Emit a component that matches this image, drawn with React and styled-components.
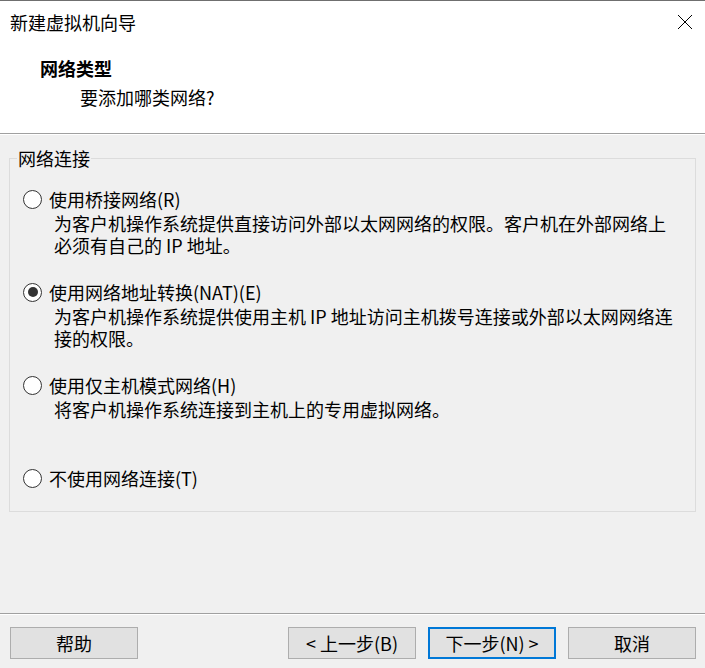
import React from "react";
import styled, { createGlobalStyle } from "styled-components";

const GlobalStyles = createGlobalStyle`
  html, body {
    margin: 0;
    padding: 0;
    background: #f0f0f0;
    font-family: "Noto Sans CJK SC", "Noto Sans", sans-serif;
    color: #000;
  }
  * { box-sizing: border-box; }
`;

const Window = styled.div`
  width: 705px;
  height: 668px;
  display: flex;
  flex-direction: column;
  background: #f0f0f0;
`;

const Header = styled.div`
  height: 134px;
  background: #fff;
  border-top: 1px solid #6f6f6f;
  border-bottom: 1px solid #a0a0a0;
  display: flex;
  flex-direction: column;
`;

const TitleBar = styled.div`
  display: flex;
  align-items: center;
  justify-content: space-between;
  height: 24px;
  margin-top: 9px;
  padding: 0 12px 0 10px;
`;

const Title = styled.div`
  font-size: 18px;
  line-height: 24px;
`;

const Close = styled.svg`
  width: 16px;
  height: 16px;
  display: block;
`;

const Heading = styled.div`
  font-size: 18px;
  line-height: 24px;
  font-weight: bold;
  margin: 22px 0 0 40px;
`;

const SubHeading = styled.div`
  font-size: 18px;
  line-height: 24px;
  margin: 5px 0 0 80px;
`;

const Main = styled.div`
  flex: 1;
  border-top: 1px solid #fff;
  padding: 11px 9px 0;
`;

const Group = styled.fieldset`
  margin: 0;
  padding: 18px 0 22px 13px;
  border: 1px solid #dcdcdc;
  min-width: 0;
`;

const Legend = styled.legend`
  font-size: 18px;
  line-height: 24px;
  padding: 0 1px;
  margin-left: -6px;
  color: #000;
`;

const Options = styled.div`
  display: flex;
  flex-direction: column;
  gap: 25px;
`;

const Option = styled.label`
  display: flex;
  flex-direction: column;
`;

const OptionHead = styled.div`
  display: flex;
  align-items: center;
  gap: 7px;
  height: 22px;
  font-size: 18px;
  line-height: 22px;
`;

const Radio = styled.span`
  width: 19px;
  height: 19px;
  border-radius: 50%;
  border: 1px solid #333;
  background: #fff;
  display: flex;
  align-items: center;
  justify-content: center;
  flex: none;

  &::after {
    content: "";
    width: 10px;
    height: 10px;
    border-radius: 50%;
    background: ${(p) => (p.checked ? "#333" : "transparent")};
  }
`;

const Desc = styled.div`
  margin: 2px 0 0 31px;
  min-height: 44px;
  font-size: 18px;
  line-height: 22px;
  width: 624px;
`;

const Footer = styled.div`
  border-top: 1px solid #a0a0a0;
  box-shadow: inset 0 1px 0 #fff;
  padding: 13px 9px 9px 10px;
  display: flex;
  align-items: center;
`;

const Button = styled.button`
  width: 128px;
  height: 32px;
  margin-left: ${(p) => p.gap || 0}px;
  background: #e1e1e1;
  border: ${(p) => (p.primary ? "2px solid #0078d7" : "1px solid #adadad")};
  font-family: inherit;
  font-size: 18px;
  color: #000;
  padding: 0;
  display: flex;
  align-items: center;
  justify-content: center;
`;

const Spacer = styled.div`
  flex: 1;
`;

const options = [
  {
    label: "使用桥接网络(R)",
    desc: "为客户机操作系统提供直接访问外部以太网网络的权限。客户机在外部网络上必须有自己的 IP 地址。",
  },
  {
    label: "使用网络地址转换(NAT)(E)",
    desc: "为客户机操作系统提供使用主机 IP 地址访问主机拨号连接或外部以太网网络连接的权限。",
    checked: true,
  },
  {
    label: "使用仅主机模式网络(H)",
    desc: "将客户机操作系统连接到主机上的专用虚拟网络。",
  },
  { label: "不使用网络连接(T)" },
];

export default function App() {
  return (
    <Window>
      <GlobalStyles />
      <Header>
        <TitleBar>
          <Title>新建虚拟机向导</Title>
          <Close viewBox="0 0 16 16">
            <path d="M1 1L15 15M15 1L1 15" stroke="#000" strokeWidth="1" fill="none" />
          </Close>
        </TitleBar>
        <Heading>网络类型</Heading>
        <SubHeading>要添加哪类网络?</SubHeading>
      </Header>
      <Main>
        <Group>
          <Legend>网络连接</Legend>
          <Options>
            {options.map((o) => (
              <Option key={o.label}>
                <OptionHead>
                  <Radio checked={o.checked} />
                  {o.label}
                </OptionHead>
                {o.desc && <Desc>{o.desc}</Desc>}
              </Option>
            ))}
          </Options>
        </Group>
      </Main>
      <Footer>
        <Button>帮助</Button>
        <Spacer />
        <Button>&lt; 上一步(B)</Button>
        <Button gap={12} primary>下一步(N) &gt;</Button>
        <Button gap={12}>取消</Button>
      </Footer>
    </Window>
  );
}
